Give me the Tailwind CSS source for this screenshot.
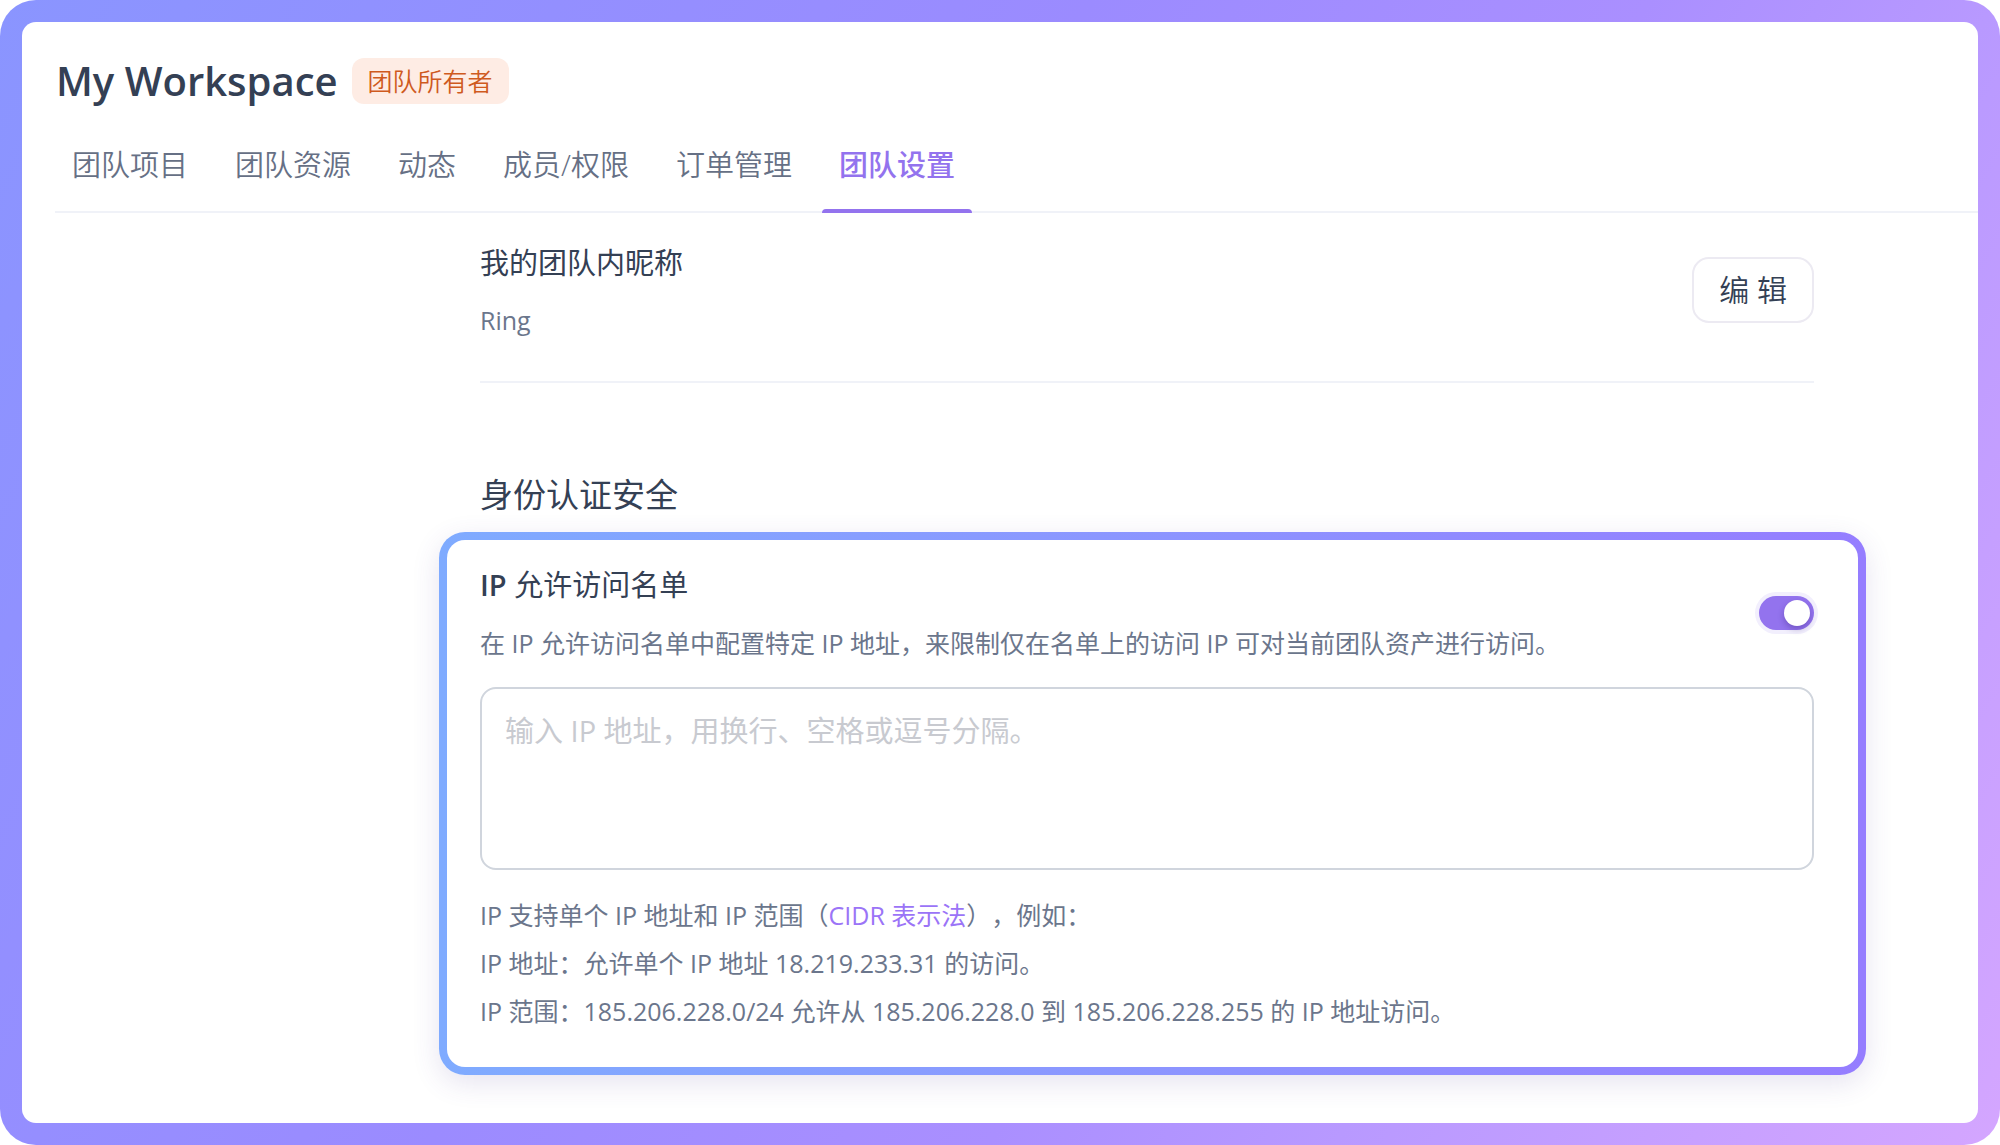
<!DOCTYPE html>
<html lang="zh-CN">
<head>
  <meta charset="UTF-8">
  <meta name="viewport" content="width=device-width, initial-scale=1.0">
  <title>My Workspace - 团队设置</title>
  <script src="https://cdn.jsdelivr.net/npm/@tailwindcss/browser@4"></script>
</head>
<body class="bg-white font-['Open_Sans','Noto_Sans_CJK_SC',sans-serif] text-[#344054]">
  <div class="flex min-h-screen rounded-[36px] bg-[linear-gradient(120deg,#8a95ff_0%,#938fff_21%,#9b8bff_41%,#aa8fff_62%,#b899ff_75%,#d4a6ff_100%)] p-[22px]">
    <div class="flex-1 rounded-[14px] bg-white pt-9">

      <!-- 标题 -->
      <header class="flex items-center gap-[14px] pl-[34px]">
        <h1 class="text-[40px] leading-[46px] font-semibold">My Workspace</h1>
        <span class="rounded-xl bg-[#feece4] px-4 text-[25px] leading-[46px] font-[350] text-[#cf5a1e]">团队所有者</span>
      </header>

      <!-- 标签页 -->
      <nav class="mt-[13px] ml-[33px] flex gap-[13px] border-b-2 border-[#f0f2f8] text-[29px] leading-[44px] font-[350] text-[#667085]">
        <a href="#projects" class="px-[17px] pt-[26px] pb-6">团队项目</a>
        <a href="#resources" class="px-[17px] pt-[26px] pb-6">团队资源</a>
        <a href="#activity" class="px-[17px] pt-[26px] pb-6">动态</a>
        <a href="#members" class="px-[17px] pt-[26px] pb-6">成员/权限</a>
        <a href="#orders" class="px-[17px] pt-[26px] pb-6">订单管理</a>
        <a href="#settings" aria-current="page" class="relative px-[17px] pt-[26px] pb-6 font-medium text-[#9373ee]">
          团队设置
          <span class="absolute inset-x-0 -bottom-0.5 h-1 rounded-t-[4px] bg-[#9373ee]"></span>
        </a>
      </nav>

      <main class="mr-28 ml-[417px] pt-7">
        <section class="mr-[52px] ml-[41px] flex items-center justify-between border-b-2 border-[#f0f2f8] pb-[42px]">
          <div>
            <h3 class="text-[29px] leading-[44px] font-normal">我的团队内昵称</h3>
            <p class="mt-4 text-[25px] leading-[38px] text-[#6b768c]">Ring</p>
          </div>
          <button type="button" class="rounded-[17px] border-2 border-[#eceaf2] bg-white px-[25px] text-[30px] leading-[62px] font-[350]">编 辑</button>
        </section>

        <h2 class="mt-[88px] ml-[41px] text-[33px] leading-[48px] font-normal">身份认证安全</h2>

        <!-- IP 允许访问名单 -->
        <section class="mt-[13px] rounded-[26px] bg-linear-to-r from-[#7fabff] to-[#957dff] p-2 shadow-[0_8px_28px_rgba(80,60,150,0.14)]">
          <div class="rounded-[18px] bg-white pt-[23px] pr-11 pb-8 pl-[33px]">
            <div class="flex items-center justify-between">
              <div>
                <label for="ip-switch" class="block text-[29px] leading-[44px] font-normal"><span class="font-semibold">IP</span> 允许访问名单</label>
                <p class="mt-4 text-[25px] leading-10 text-[#6b768c]">在 IP 允许访问名单中配置特定 IP 地址，来限制仅在名单上的访问 IP 可对当前团队资产进行访问。</p>
              </div>
              <input id="ip-switch" type="checkbox" role="switch" checked class="flex h-[34px] w-[55px] shrink-0 appearance-none items-center justify-start rounded-full bg-[#c9cbd3] px-1 ring-4 ring-[#f2effd] before:size-[26px] before:rounded-full before:bg-white before:shadow-[0_3px_6px_rgba(40,20,100,0.3)] checked:justify-end checked:bg-[#9373ee]">
            </div>

            <textarea aria-label="IP 地址" placeholder="输入 IP 地址，用换行、空格或逗号分隔。" class="mt-6 block h-[183px] w-full resize-none rounded-2xl border-2 border-[#d0d5dd] px-[23px] py-5 text-[29px] leading-[44px] placeholder:text-[#c8cad0]"></textarea>

            <div class="mt-[21px] text-[25px] leading-[48px] text-[#6b768c] [text-spacing-trim:space-all]">
              <p>IP 支持单个 IP 地址和 IP 范围（<a href="#cidr" class="text-[#9b74f7]">CIDR 表示法</a>），例如：</p>
              <p>IP 地址：允许单个 IP 地址 18.219.233.31 的访问。</p>
              <p>IP 范围：185.206.228.0/24 允许从 185.206.228.0 到 185.206.228.255 的 IP 地址访问。</p>
            </div>
          </div>
        </section>
      </main>
    </div>
  </div>
</body>
</html>
